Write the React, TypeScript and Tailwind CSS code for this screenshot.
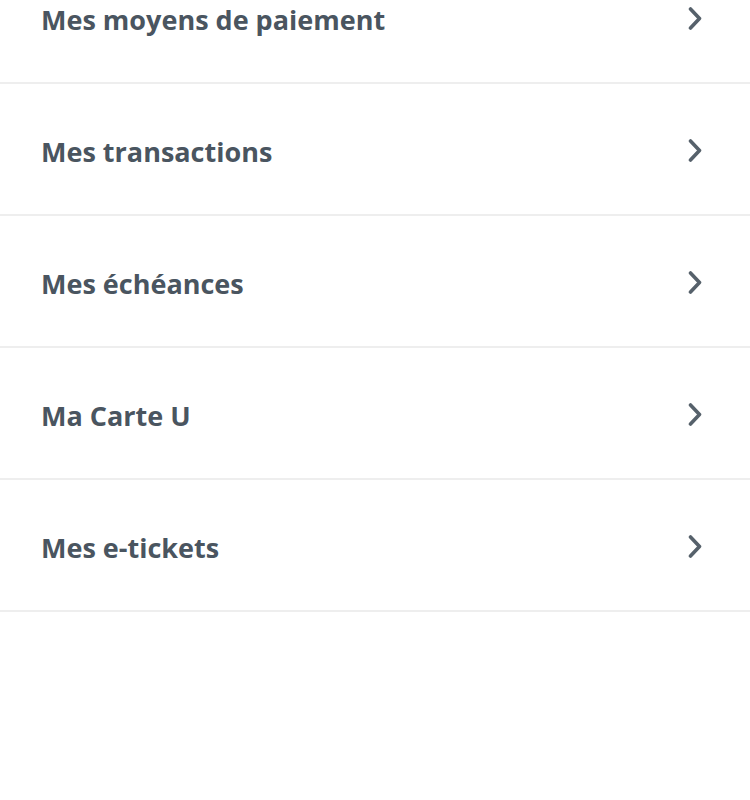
import React from "react";

const items = [
  "Mes moyens de paiement",
  "Mes transactions",
  "Mes échéances",
  "Ma Carte U",
  "Mes e-tickets",
];

function Chevron() {
  return (
    <svg width="16" height="24" viewBox="0 0 16 24" fill="none" className="shrink-0 mt-[4px]">
      <path d="M3.5 2 L12.5 11.5 L3.5 21" stroke="#56616b" strokeWidth="3.6" strokeLinecap="round" strokeLinejoin="round" />
    </svg>
  );
}

export default function App() {
  return (
    <div className="w-[750px] h-[800px] bg-white overflow-hidden" style={{ fontFamily: "'Open Sans', 'Noto Sans', sans-serif" }}>
      <div className="-mt-[48px] flex flex-col">
        {items.map((t) => (
          <div key={t} className="h-[132px] flex items-center justify-between pl-[41px] pr-[47px] border-b-2 border-[#eeeeee]">
            <span className="text-[27px] font-bold text-[#4a5560] leading-none pt-[4px] [font-variant-ligatures:none]">{t}</span>
            <Chevron />
          </div>
        ))}
      </div>
    </div>
  );
}
